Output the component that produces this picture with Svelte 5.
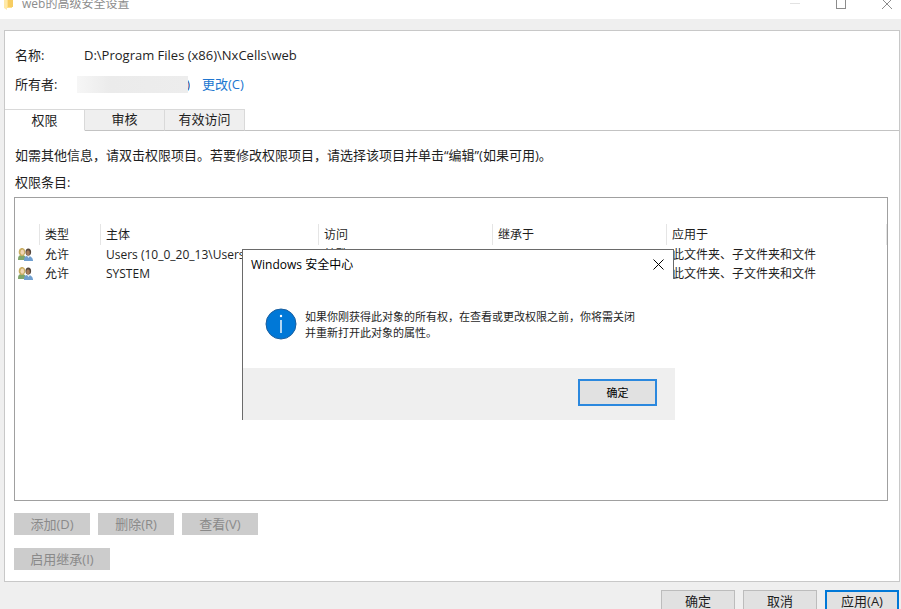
<script lang="ts">
	const tabs = ['权限', '审核', '有效访问'];
	let activeTab = '权限';
	let showDialog = true;

	const entries = [
		{
			type: '允许',
			principal: 'Users (10_0_20_13\\Users)',
			access: '特殊',
			inherited: '无',
			applies: '此文件夹、子文件夹和文件'
		},
		{
			type: '允许',
			principal: 'SYSTEM',
			access: '特殊',
			inherited: '无',
			applies: '此文件夹、子文件夹和文件'
		}
	];

	function closeDialog() {
		showDialog = false;
	}
</script>

<div class="window">
	<header class="titlebar">
		<svg class="folder" width="10" height="16" viewBox="0 0 10 16">
			<path d="M0 0h8v14H3l-3-2z" fill="#ffe08a" />
			<path d="M4 2l5-1v12H4z" fill="#f7cd62" />
			<path d="M0 1l3 2v13l-3-2z" fill="#ffe9a8" />
		</svg>
		<h1>web的高级安全设置</h1>
		<div class="controls">
			<button aria-label="最小化" disabled>
				<svg width="10" height="10"><path d="M0 4.5h10" stroke="#e2e2e2" /></svg>
			</button>
			<button aria-label="最大化">
				<svg width="10" height="10">
					<rect x="0.5" y="0.5" width="9" height="9" fill="none" stroke="#8c8c8c" />
				</svg>
			</button>
			<button aria-label="关闭">
				<svg width="10" height="10"><path d="M0 0l10 10M10 0L0 10" stroke="#8c8c8c" /></svg>
			</button>
		</div>
	</header>

	<main class="panel">
		<div class="info">
			<div class="info-row">
				<span class="label">名称:</span>
				<span>D:\Program Files (x86)\NxCells\web</span>
			</div>
			<div class="info-row">
				<span class="label owner">所有者:</span>
				<span class="redacted"></span>
				<span class="paren">)</span>
				<a href="#owner">更改(C)</a>
			</div>
		</div>

		<div class="tabs" role="tablist">
			{#each tabs as tab}
				<button
					role="tab"
					class="tab"
					class:active={tab === activeTab}
					aria-selected={tab === activeTab}
					on:click={() => (activeTab = tab)}>{tab}</button
				>
			{/each}
			<div class="tab-line"></div>
		</div>

		<section class="content">
			<p>如需其他信息，请双击权限项目。若要修改权限项目，请选择该项目并单击“编辑”(如果可用)。</p>
			<p id="entries-label">权限条目:</p>

			<div class="list">
				<table aria-labelledby="entries-label">
					<colgroup>
						<col class="col-icon" />
						<col class="col-type" />
						<col class="col-principal" />
						<col class="col-mid" />
						<col class="col-mid" />
						<col />
					</colgroup>
					<thead>
						<tr>
							<th></th>
							<th>类型</th>
							<th>主体</th>
							<th>访问</th>
							<th>继承于</th>
							<th>应用于</th>
						</tr>
					</thead>
					<tbody>
						{#each entries as entry}
							<tr>
								<td class="icon-cell">
									<svg width="15" height="13" viewBox="0 0 15 13">
										<path d="M0 12c0-4 1-5 4-5s4 2 4 5z" fill="#7fa56b" />
										<path d="M1 6C0 2 2 0 4 0s4 2 3 6L5 8H3z" fill="#c9ad62" />
										<ellipse cx="4.3" cy="4.2" rx="1.8" ry="2.6" fill="#f0d6b4" />
										<path d="M6 13c0-4 1-5 4-5s5 2 5 5z" fill="#6f9fd0" />
										<path d="M9 8l1.5 2L12 8z" fill="#e4eef8" />
										<ellipse cx="10.3" cy="4" rx="2.8" ry="3.6" fill="#54463c" />
										<ellipse cx="10" cy="5" rx="1.8" ry="2.8" fill="#a77d5c" />
									</svg>
								</td>
								<td>{entry.type}</td>
								<td>{entry.principal}</td>
								<td>{entry.access}</td>
								<td>{entry.inherited}</td>
								<td>{entry.applies}</td>
							</tr>
						{/each}
					</tbody>
				</table>
			</div>

			<div class="actions">
				<button disabled>添加(D)</button>
				<button disabled>删除(R)</button>
				<button disabled>查看(V)</button>
			</div>
			<div class="actions">
				<button class="wide" disabled>启用继承(I)</button>
			</div>
		</section>
	</main>

	<footer class="bottom">
		<button>确定</button>
		<button>取消</button>
		<button class="default">应用(A)</button>
	</footer>

	{#if showDialog}
		<dialog open aria-labelledby="dialog-title">
			<div class="dialog-head">
				<h2 id="dialog-title">Windows 安全中心</h2>
				<button aria-label="关闭" on:click={closeDialog}>
					<svg width="11" height="11">
						<path d="M0.5 0.5l10 10M10.5 0.5l-10 10" stroke="#000" />
					</svg>
				</button>
			</div>
			<div class="dialog-body">
				<svg width="32" height="32" viewBox="0 0 32 32">
					<circle cx="16" cy="16" r="15" fill="#0078d7" stroke="#1c5f9e" />
					<path d="M16 12v13" stroke="#fff" stroke-width="1.4" />
					<circle cx="16" cy="8" r="1.2" fill="#fff" />
				</svg>
				<p>如果你刚获得此对象的所有权，在查看或更改权限之前，你将需关闭并重新打开此对象的属性。</p>
			</div>
			<div class="dialog-foot">
				<button on:click={closeDialog}>确定</button>
			</div>
		</dialog>
	{/if}
</div>

<style>
	:global(body) {
		overflow: hidden;
		background: #efefef;
	}

	.window {
		position: relative;
		height: 100vh;
		overflow: hidden;
		display: flow-root;
		font-family: 'Open Sans', 'Noto Sans CJK SC', sans-serif;
		font-size: 13px;
		line-height: 20px;
		color: #1e1e1e;
	}

	h1,
	h2,
	p {
		margin: 0;
		font-weight: normal;
	}

	button {
		font: inherit;
		color: inherit;
		padding: 0;
		border: none;
		background: none;
	}

	svg {
		display: block;
	}

	/* Title bar, its upper part runs off the screen */
	.titlebar {
		display: flex;
		align-items: center;
		height: 31px;
		margin-top: -12px;
		padding-left: 4px;
		background: #fff;
	}

	.folder {
		margin-bottom: 4px;
	}

	.titlebar h1 {
		flex: 1;
		margin-left: 8px;
		font-size: 12px;
		color: #8c8c8c;
	}

	.controls {
		display: flex;
		gap: 18px;
	}

	.controls button {
		display: flex;
		justify-content: center;
		width: 28px;
	}

	/* Main panel */
	.panel {
		margin: 11px 1px 0 4px;
		border: 1px solid #c8c8c8;
		background: #fff;
	}

	.info {
		display: flex;
		flex-direction: column;
		gap: 9px;
		padding: 14px 10px 15px;
	}

	.info-row {
		display: flex;
		align-items: center;
		height: 20px;
	}

	.label {
		width: 69px;
	}

	.label.owner {
		width: 62px;
	}

	.redacted {
		width: 111px;
		height: 17px;
		background: linear-gradient(90deg, #f6f6f6, #ebebeb 30%, #ededed);
	}

	.paren {
		display: flex;
		justify-content: flex-end;
		width: 2px;
		margin-right: 12px;
		overflow: hidden;
		color: #1b4c8c;
	}

	a {
		color: #2076d0;
		text-decoration: none;
	}

	.tabs {
		display: flex;
		height: 22px;
	}

	.tab {
		width: 80px;
		padding-bottom: 2px;
		border: 1px solid #d9d9d9;
		border-bottom-color: #c3c3c3;
		border-left: none;
		background: #efefef;
		line-height: 18px;
	}

	.tab.active {
		padding-bottom: 0;
		border-bottom-color: #fff;
		background: #fff;
	}

	.tab-line {
		flex: 1;
		border-bottom: 1px solid #c3c3c3;
	}

	.content {
		padding: 14px 11px 11px 9px;
	}

	.content p {
		padding-left: 1px;
		margin-bottom: 7px;
	}

	.content #entries-label {
		margin-bottom: 5px;
	}

	.list {
		height: 276px;
		margin-bottom: 12px;
		padding-top: 26px;
		border: 1px solid #a0a0a0;
	}

	table {
		width: 100%;
		table-layout: fixed;
		border-collapse: collapse;
		font-size: 12px;
		line-height: 19px;
	}

	.col-icon {
		width: 25px;
	}

	.col-type {
		width: 61px;
	}

	.col-principal {
		width: 218px;
	}

	.col-mid {
		width: 174px;
	}

	th,
	td {
		padding: 0 0 0 5px;
		text-align: left;
		font-weight: normal;
		white-space: nowrap;
	}

	th {
		height: 21px;
		box-shadow: inset -1px 0 #e5e5e5;
	}

	td {
		height: 19px;
	}

	td.icon-cell {
		padding-left: 3px;
	}

	.actions {
		display: flex;
		gap: 8px;
	}

	.actions + .actions {
		margin-top: 13px;
	}

	.actions button {
		width: 76px;
		height: 22px;
		background: #ccc;
		color: #8a8a8a;
		line-height: 22px;
	}

	.actions button.wide {
		width: 96px;
	}

	.bottom {
		display: flex;
		justify-content: flex-end;
		gap: 8px;
		padding: 8px 2px;
	}

	.bottom button {
		width: 74px;
		height: 22px;
		border: 1px solid #bcbcbc;
		background: #e1e1e1;
	}

	.bottom button.default {
		border: 2px solid #0078d7;
		line-height: 18px;
	}

	/* Message box */
	dialog {
		position: absolute;
		top: 249px;
		left: 242px;
		width: 433px;
		box-sizing: border-box;
		margin: 0;
		padding: 0;
		border: none;
		border-left: 1px solid #6a6a6a;
		background: none;
		color: #000;
	}

	.dialog-head {
		display: flex;
		align-items: center;
		justify-content: space-between;
		height: 29px;
		margin-right: 1px;
		padding: 0 9px 0 8px;
		border-top: 1px solid #6a6a6a;
		border-right: 1px solid #6a6a6a;
		background: #fff;
	}

	.dialog-head h2 {
		font-size: 12px;
	}

	.dialog-body {
		display: flex;
		align-items: flex-start;
		gap: 8px;
		height: 60px;
		padding: 29px 32px 0 22px;
		background: #fff;
	}

	.dialog-body svg {
		flex: none;
	}

	.dialog-body p {
		padding-top: 1px;
		font-size: 11px;
		line-height: 16px;
		color: #1e1e1e;
	}

	.dialog-foot {
		display: flex;
		justify-content: flex-end;
		padding: 11px 18px 14px;
		background: #efefef;
	}

	.dialog-foot button {
		width: 79px;
		height: 27px;
		border: 2px solid #2b88de;
		background: #e1e1e1;
		font-size: 11px;
	}
</style>
